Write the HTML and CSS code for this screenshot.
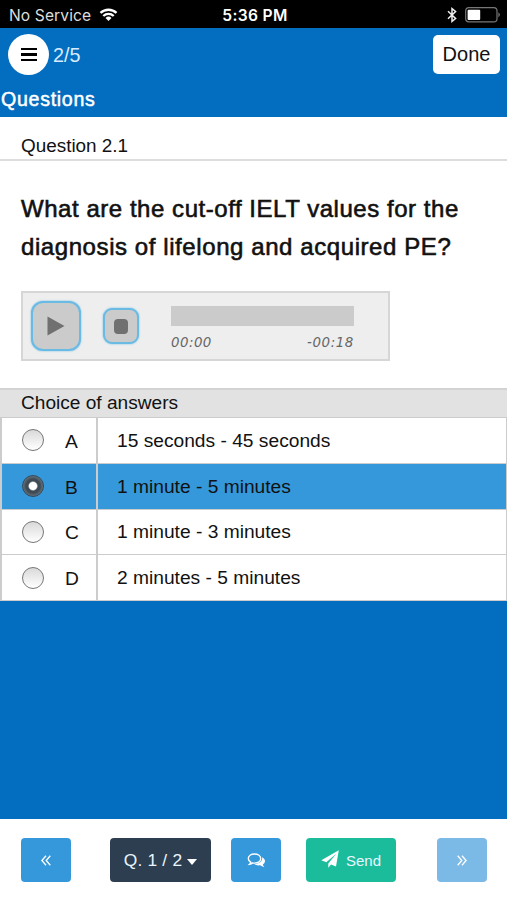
FILE: index.html
```html
<!DOCTYPE html>
<html lang="en">
<head>
<meta charset="utf-8">
<title>Questions</title>
<link rel="stylesheet" href="styles.css">
</head>
<body>
<div class="status">
  <div class="carrier"><span>No Service</span>
    <svg width="19" height="14" viewBox="0 0 20 15" fill="none" stroke="#fff" stroke-width="2.5"><path d="M1.4 5.3a12.4 12.4 0 0 1 17.2 0M4.4 8.6a8 8 0 0 1 11.2 0"/><path d="M10 14l-3.2-3.3a4.7 4.7 0 0 1 6.4 0z" fill="#fff" stroke="none"/></svg>
  </div>
  <div class="clock">5:36 PM</div>
  <div class="indicators">
    <svg width="10" height="16" viewBox="0 0 10 16" fill="none" stroke="#eee" stroke-width="1.5"><path d="M1 4.2l7.6 7.3L5 14.4V1.600l3.600 2.900L1 11.800"/></svg>
    <svg width="36" height="16" viewBox="0 0 36 16"><rect x=".7" y=".7" width="31.300" height="14.2" rx="3.2" fill="none" stroke="#777" stroke-width="1.2"/><rect x="2.6" y="2.7" width="12.6" height="10.4" rx="1" fill="#fff"/><path d="M33.400 5.2q3 2.6 0 5.2z" fill="#777"/></svg>
  </div>
</div>
<header class="header">
  <div class="header-row">
    <button class="menu" aria-label="Menu"><i></i><i></i><i></i></button>
    <span class="progress">2/5</span>
    <button class="done">Done</button>
  </div>
  <h1 class="title">Questions</h1>
</header>
<main>
  <div class="question-bar">Question 2.1</div>
  <section class="question">
    <h2>What are the cut-off IELT values for the<br><span class="second">diagnosis of lifelong and acquired PE?</span></h2>
    <div class="player">
      <button class="play" aria-label="Play"><svg width="18" height="20" viewBox="0 0 18 20"><path d="M.5.5L17.5 10 .5 19.5z" fill="#707070"/></svg></button>
      <button class="stop" aria-label="Stop"><i></i></button>
      <div class="timeline"><div class="track"></div><div class="times"><span>00:00</span><span>-00:18</span></div></div>
    </div>
  </section>
  <div class="choice-bar">Choice of answers</div>
  <div class="answers">
    <div class="answer"><div class="key"><i class="radio"></i><span>A</span></div><div class="text">15 seconds - 45 seconds</div></div>
    <div class="answer selected"><div class="key"><i class="radio"></i><span>B</span></div><div class="text">1 minute - 5 minutes</div></div>
    <div class="answer"><div class="key"><i class="radio"></i><span>C</span></div><div class="text">1 minute - 3 minutes</div></div>
    <div class="answer"><div class="key"><i class="radio"></i><span>D</span></div><div class="text">2 minutes - 5 minutes</div></div>
  </div>
</main>
<footer class="footer">
  <button class="btn prev" aria-label="Previous"><svg width="10" height="11" viewBox="0 0 10 11" fill="none" stroke="#fff" stroke-width="1.3"><path d="M5 .8L.9 5.5 5 10.2M9.3.8L5.2 5.5l4.1 4.7"/></svg></button>
  <button class="btn picker"><span>Q. 1 / 2</span><i></i></button>
  <button class="btn comments" aria-label="Comments"><svg width="19" height="15" viewBox="0 0 18 15"><path d="M7 1c3.5 0 6.2 2 6.2 4.6S10.500 10.100 7 10.100q-1 0-1.900-.2-1.300 1-3 1.300.9-.9 1.100-2.100Q.8 7.800.8 5.600C.8 3 3.500 1 7 1z" fill="none" stroke="#fff" stroke-width="1.400"/><path d="M14.600 4.300c1.800.9 2.900 2.200 2.900 3.800 0 1.400-.9 2.600-2.200 3.400.2 1 .8 1.700 1.500 2.400-1.700-.1-3-.7-4.100-1.600-2.200.4-4.500 0-6-1.200 4.900 0 8.600-2.700 7.900-6.800z" fill="#fff"/></svg></button>
  <button class="btn send"><svg width="18" height="18" viewBox="0 0 18 18"><path d="M17.800.3L15 16.600l-5-2.100-2.700 3.200v-4.300L15.200 3.700 5.300 12.300.3 10.300z" fill="#fff"/></svg><span>Send</span></button>
  <button class="btn next" aria-label="Next"><svg width="10" height="11" viewBox="0 0 10 11" fill="none" stroke="#fff" stroke-width="1.3"><path d="M.7.8l4.100 4.700L.7 10.200M5 .8l4.100 4.700L5 10.200"/></svg></button>
</footer>
</body>
</html>
```
FILE: styles.css
```css
* { box-sizing: border-box; }
body {
  margin: 0;
  height: 900px;
  display: flex;
  flex-direction: column;
  background: #036dc0;
  color: #111;
  font: 19.2px/22px "Liberation Sans", Arial, sans-serif;
  overflow: hidden;
}
button { border: 0; padding: 0; font: inherit; color: inherit; }
svg { display: block; flex: none; }

.status {
  height: 28px;
  flex: none;
  background: #000;
  color: #fff;
  display: grid;
  grid-template-columns: 1fr auto 1fr;
  align-items: center;
  padding: 2px 6px 0 9px;
  font: 15.6px/20px Inter, sans-serif;
}
.carrier { display: flex; align-items: center; gap: 8px; color: #ddd; letter-spacing: .1px; }
.carrier span { padding-top: 1px; }
.carrier svg { margin-top: -1px; }
.clock { font-weight: 600; letter-spacing: .35px; padding-top: 1px; }
.indicators { display: flex; justify-content: flex-end; align-items: center; gap: 8px; margin-top: -1px; }

.header { height: 89px; flex: none; color: #fff; padding: 6px 7px 0 8px; }
.header-row { display: flex; align-items: center; height: 41px; }
.menu {
  width: 41px; height: 41px; border-radius: 50%; background: #fff;
  display: flex; flex-direction: column; align-items: center; justify-content: center; gap: 3px;
}
.menu i { width: 16px; height: 2.6px; background: #000; }
.progress { margin-left: 4px; color: #d9ecff; font-size: 19.8px; }
.done { margin-left: auto; margin-top: -1px; width: 67px; height: 39px; border-radius: 5px; background: #fff; color: #111; font-size: 20px; }
.title { margin: 12px 0 0 -7px; font-size: 19.6px; line-height: 24px; font-weight: 400; letter-spacing: .7px; -webkit-text-stroke: .5px #fff; }

.question-bar { height: 44px; padding: 18px 21px 0; background: #fff; border-bottom: 2px solid #ddd; font-size: 18.9px; }
.question { height: 227px; background: #fff; padding: 29px 21px 27px; }
.question h2 { margin: 0 0 25px; font-size: 24px; line-height: 38px; font-weight: 400; letter-spacing: .54px; white-space: nowrap; -webkit-text-stroke: .6px #111; }
.second { letter-spacing: .58px; }

.player { width: 369px; height: 70px; border: 2px solid #d6d6d6; background: #eee; display: flex; align-items: center; padding: 0 34px 0 8px; }
.play, .stop { background: #cbcbcb; border: 2px solid #6abbe4; box-shadow: 0 0 2px #6abbe4; display: flex; align-items: center; justify-content: center; }
.play { width: 50px; height: 50px; border-radius: 12px; }
.stop { width: 36px; height: 36px; border-radius: 9px; margin-left: 22px; }
.stop i { width: 14px; height: 15px; border-radius: 4px; background: #707070; }
.timeline { flex: 1; margin-left: 32px; padding-top: 7px; }
.track { height: 20px; background: #cbcbcb; }
.times { display: flex; justify-content: space-between; margin-top: 7px; font: italic 13.4px/20px "DejaVu Sans", sans-serif; letter-spacing: .45px; color: #666; }
.times span:last-child { letter-spacing: .6px; }

.choice-bar { height: 29px; background: #e2e2e2; border-top: 2px solid #d3d3d3; padding: 2px 21px 0; font-size: 19.1px; }
.answers { display: flex; flex-direction: column; gap: 1px; background: #ccc; padding: 1px 1px 1px 2px; }
.answer { display: grid; grid-template-columns: 94px 1fr; gap: 2px; height: 44.75px; }
.key, .text { background: #fff; display: flex; align-items: center; }
.key { padding-left: 20px; gap: 21px; }
.key span { padding-top: 3px; }
.text { padding-left: 19px; padding-top: 1px; }
.radio { width: 22px; height: 22px; border: 1.5px solid #777; border-radius: 50%; background: linear-gradient(#d9d9d9, #fff); }
.selected .key, .selected .text { background: #3498db; }
.selected .radio { border-color: #34495a; background: radial-gradient(circle, #fff 0 3.6px, #3e4b55 5px 7px, #65717a 10px); }

.footer { height: 81px; flex: none; margin-top: auto; background: #fff; display: flex; padding: 19px 20px 0 21px; color: #e9f6ff; }
.btn { height: 44px; border-radius: 4px; background: #3498db; display: flex; align-items: center; justify-content: center; }
.prev, .comments, .next { width: 50px; }
.picker { width: 101px; margin-left: 39px; background: #2c3e50; font-size: 17.4px; letter-spacing: .2px; gap: 5px; }
.picker i { border: 5.500px solid transparent; border-top: 6px solid #fff; border-bottom: 0; margin-top: 4px; }
.comments { margin-left: 20px; }
.send { width: 90px; margin-left: 25px; background: #1abc9c; font-size: 15px; gap: 7px; }
.send span { padding-top: 2px; }
.send svg { margin-top: -2px; }
.next { margin-left: auto; background: #7bb9e6; }
```
